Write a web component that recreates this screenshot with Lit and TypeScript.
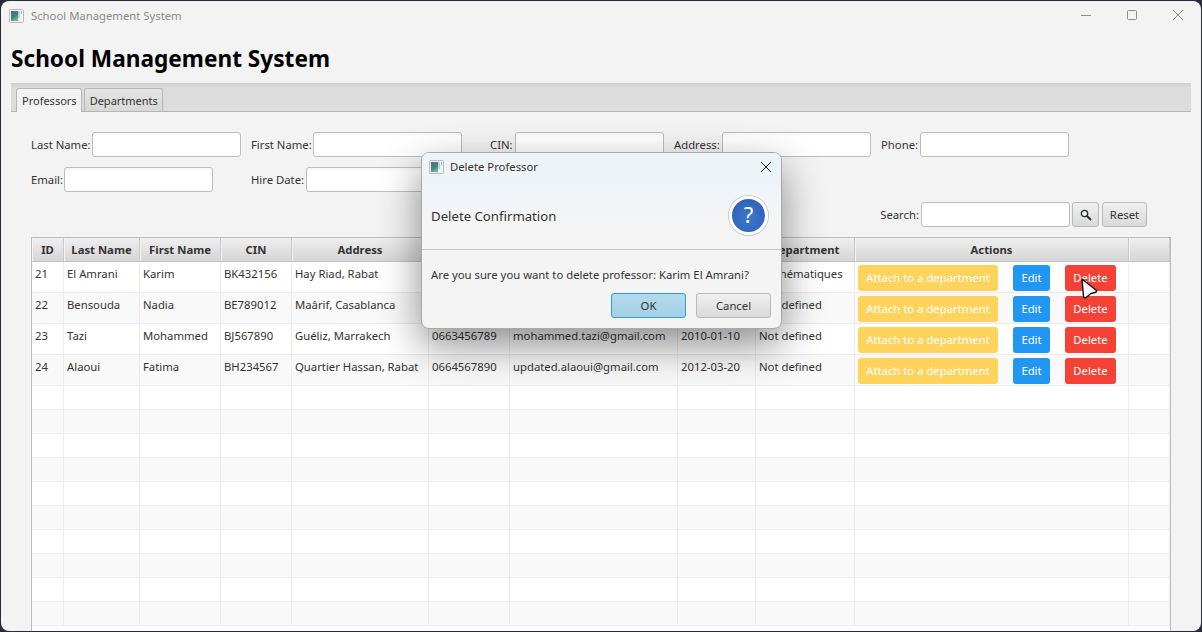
import { LitElement, css, html } from 'lit'
import { customElement } from 'lit/decorators.js'

// the dialog hides phone, email and hire date on the first two rows, so those stay empty
const professors = [
  ['21', 'El Amrani', 'Karim', 'BK432156', 'Hay Riad, Rabat', '', '', '', 'Mathématiques'],
  ['22', 'Bensouda', 'Nadia', 'BE789012', 'Maârif, Casablanca', '', '', '', 'Not defined'],
  ['23', 'Tazi', 'Mohammed', 'BJ567890', 'Guéliz, Marrakech', '0663456789', 'mohammed.tazi@gmail.com', '2010-01-10', 'Not defined'],
  ['24', 'Alaoui', 'Fatima', 'BH234567', 'Quartier Hassan, Rabat', '0664567890', 'updated.alaoui@gmail.com', '2012-03-20', 'Not defined'],
]

const columns = ['ID', 'Last Name', 'First Name', 'CIN', 'Address', 'Phone', 'Email', 'Hire Date', 'Department', 'Actions', '']

const appIcon = html`<svg class="app-icon" width="15" height="14" viewBox="0 0 15 14">
  <defs>
    <linearGradient id="ic" x1="0" y1="0" x2="0.4" y2="1">
      <stop offset="0" stop-color="#4f6f95" />
      <stop offset="0.6" stop-color="#3c8582" />
      <stop offset="1" stop-color="#6db38c" />
    </linearGradient>
  </defs>
  <rect x="0.5" y="0.5" width="14" height="13" rx="1" fill="#f1f3f3" stroke="#b9bcbe" />
  <rect x="2" y="2" width="7" height="10" fill="url(#ic)" />
  <rect x="9" y="2" width="2" height="7" fill="#c3d0cc" />
  <rect x="12" y="2" width="1" height="3" fill="#a9b8b3" />
</svg>`

@customElement('app-root')
export class AppRoot extends LitElement {
  static styles = css`
    :host {
      display: block;
      width: 1202px;
      height: 632px;
      background: #2b2a38;
      font-family: 'Noto Sans', sans-serif;
      font-size: 11.3px;
      color: #333;
      overflow: hidden;
    }
    .window {
      position: relative;
      height: 630px;
      margin: 1px;
      background: #f3f3f3;
      border-radius: 8px;
      overflow: hidden;
      display: flex;
      flex-direction: column;
    }
    .titlebar {
      height: 29px;
      flex: none;
      display: flex;
      align-items: center;
      padding-left: 8px;
      color: #8b8b8b;
      gap: 7px;
    }
    .win-buttons {
      margin-left: auto;
      display: flex;
    }
    .win-buttons svg {
      display: block;
      width: 46px;
      height: 29px;
    }
    h1 {
      margin: 13px 0 0 10px;
      font-size: 22.65px;
      line-height: 32px;
      font-weight: 700;
      color: #000;
      flex: none;
    }
    .tabs {
      flex: none;
      margin: 8px 10px 0 10px;
      height: 28px;
      background: linear-gradient(#cfcfcf, #dcdcdc 5px);
      border-bottom: 1px solid #b5b5b5;
      display: flex;
      align-items: flex-end;
      padding-left: 5px;
      gap: 2px;
    }
    .tab {
      height: 22px;
      padding: 0 4px 0 5px;
      border: 1px solid #b5b5b5;
      border-bottom: none;
      border-radius: 3px 3px 0 0;
      background: linear-gradient(#e4e4e4, #d8d8d8);
      display: flex;
      align-items: center;
      font-size: 11px;
    }
    .tab.active {
      background: #f3f3f3;
      height: 23px;
      margin-bottom: -1px;
    }
    .form {
      flex: none;
      margin: 20px 0 0 30px;
      display: grid;
      grid-template-columns: 210px 229px 174px 197px auto;
      column-gap: 10px;
      row-gap: 10px;
      justify-content: start;
    }
    .field {
      display: flex;
      align-items: center;
      justify-content: space-between;
      white-space: nowrap;
    }
    .field.last {
      width: 210px;
    }
    .field.first {
      width: 211px;
    }
    .field.cin {
      width: 174px;
    }
    .field.address {
      width: 197px;
    }
    .field.phone {
      width: 188px;
    }
    .field.email {
      width: 182px;
    }
    .field.hire {
      width: 204px;
    }
    input {
      box-sizing: border-box;
      width: 149px;
      height: 25px;
      margin: 0;
      padding: 0 6px;
      border: 1px solid #bdbdbd;
      border-radius: 3px;
      background: linear-gradient(#f7f7f7, #fff 4px);
      font: inherit;
      outline: none;
    }
    .search {
      flex: none;
      margin: 10px 54px 0 0;
      display: flex;
      justify-content: flex-end;
      align-items: center;
      gap: 2px;
    }
    .btn {
      box-sizing: border-box;
      height: 25px;
      border: 1px solid #b9b9b9;
      border-radius: 3px;
      background: linear-gradient(#f0f0f0, #d9d9d9);
      color: #333;
      font: inherit;
      padding: 0;
      display: flex;
      align-items: center;
      justify-content: center;
    }
    .search .icon-btn {
      width: 27px;
    }
    .search .reset {
      width: 45px;
      margin-left: 1px;
    }
    .table {
      flex: 1;
      min-height: 0;
      margin: 10px 30px 0 30px;
      border: 1px solid #bdbdbd;
      border-bottom: none;
      background: #fff;
      overflow: hidden;
    }
    .row {
      display: grid;
      grid-template-columns: 32px 76px 81px 71px 137px 81px 168px 78px 99px 274px 41px;
      height: 24px;
      box-sizing: border-box;
      border-bottom: 1px solid #ececec;
    }
    .row.data {
      height: 31px;
    }
    .row:nth-child(odd) {
      background: #f9f9f9;
    }
    .row > div {
      border-right: 1px solid #ececec;
      padding: 4px 3px 0;
      white-space: nowrap;
      overflow: hidden;
      line-height: 16px;
    }
    .row.head {
      background: linear-gradient(#efefef, #d6d6d6);
      border-bottom: 1px solid #c4c4c4;
      height: 24px;
      font-weight: 700;
      text-align: center;
    }
    .row.head > div {
      border-right: 1px solid #c8c8c8;
      box-shadow: inset 1px 0 0 #f4f4f4;
      padding-top: 4px;
    }
    .row > .actions {
      display: flex;
      gap: 15px;
      padding: 3px 0 0 3px;
    }
    .action {
      height: 26px;
      border: none;
      border-radius: 3px;
      color: #fff;
      font: inherit;
      padding: 0;
    }
    .attach {
      width: 140px;
      background: #ffd35c;
    }
    .edit {
      width: 37px;
      background: #2196f3;
    }
    .delete {
      width: 51px;
      background: #f44336;
    }
    .cursor {
      position: absolute;
      left: 1079px;
      top: 275px;
    }
    .dialog {
      position: absolute;
      left: 420px;
      top: 151px;
      width: 361px;
      height: 177px;
      box-sizing: border-box;
      border: 1px solid #a9a9a9;
      border-radius: 8px;
      background: #f4f4f4;
      box-shadow: 0 16px 42px rgba(0, 0, 0, 0.45);
      display: flex;
      flex-direction: column;
      overflow: hidden;
    }
    .dialog-title {
      flex: none;
      height: 27px;
      display: flex;
      align-items: center;
      gap: 6px;
      padding-left: 7px;
      background: #eef3f8;
    }
    .dialog-title svg:last-child {
      margin-left: auto;
      margin-right: 9px;
    }
    .dialog-header {
      flex: none;
      height: 70px;
      box-sizing: border-box;
      border-bottom: 1px solid #c8c8c8;
      background: linear-gradient(#eef3f8, #f5f5f5 60%);
      display: flex;
      align-items: center;
      justify-content: space-between;
      padding: 2px 13px 0 9px;
      font-size: 13.2px;
    }
    .help {
      box-sizing: border-box;
      width: 39px;
      height: 39px;
      border-radius: 50%;
      background: radial-gradient(circle at 50% 60%, #3d78d0, #2a5cae);
      border: 3px solid #fff;
      box-shadow: 0 0 0 1px #c0c8d4;
      color: #fff;
      font-size: 22px;
      line-height: 31px;
      text-align: center;
    }
    .dialog-text {
      margin: 17px 0 0 9px;
      line-height: 16px;
    }
    .dialog-buttons {
      margin: 10px 10px 0 0;
      display: flex;
      justify-content: flex-end;
      gap: 10px;
    }
    .dialog-buttons .btn {
      width: 75px;
      height: 25px;
    }
    .dialog-buttons .ok {
      background: linear-gradient(#b4d9ec, #a4d0e6);
      border: 1px solid #2f9fd0;
    }
  `

  render() {
    const empty = Array.from({ length: 10 })
    return html`
      <div class="window">
        <div class="titlebar">
          ${appIcon}
          <span>School Management System</span>
          <div class="win-buttons">
            <svg viewBox="0 0 46 29"><path d="M18 14.5h10" stroke="#8f8f8f" fill="none" /></svg>
            <svg viewBox="0 0 46 29"><rect x="18.5" y="9.5" width="9" height="9" rx="1" stroke="#8f8f8f" fill="none" /></svg>
            <svg viewBox="0 0 46 29"><path d="M18 9l10 10M28 9L18 19" stroke="#8f8f8f" fill="none" /></svg>
          </div>
        </div>
        <h1>School Management System</h1>
        <div class="tabs">
          <div class="tab active">Professors</div>
          <div class="tab">Departments</div>
        </div>
        <div class="form">
          <label class="field last">Last Name:<input /></label>
          <label class="field first">First Name:<input /></label>
          <label class="field cin">CIN:<input /></label>
          <label class="field address">Address:<input /></label>
          <label class="field phone">Phone:<input /></label>
          <label class="field email">Email:<input /></label>
          <label class="field hire">Hire Date:<input /></label>
        </div>
        <div class="search">
          <span>Search:</span>
          <input />
          <button class="btn icon-btn">
            <svg width="12" height="12" viewBox="0 0 12 12">
              <circle cx="4.5" cy="4.5" r="3.2" fill="#e8eef2" stroke="#2a2a2a" stroke-width="1.3" />
              <path d="M7 7l4 4" stroke="#2a2a2a" stroke-width="2" />
            </svg>
          </button>
          <button class="btn reset">Reset</button>
        </div>
        <div class="table">
          <div class="row head">${columns.map((c) => html`<div>${c}</div>`)}</div>
          ${professors.map(
            (p) => html`<div class="row data">
              ${p.map((v) => html`<div>${v}</div>`)}
              <div class="actions">
                <button class="action attach">Attach to a department</button>
                <button class="action edit">Edit</button>
                <button class="action delete">Delete</button>
              </div>
              <div></div>
            </div>`
          )}
          ${empty.map(() => html`<div class="row">${columns.map(() => html`<div></div>`)}</div>`)}
        </div>
        <svg class="cursor" width="20" height="25" viewBox="0 0 20 25">
          <path d="M2 3L16.5 14.5Q17 16 15 16.5L11 17.5 6 21.5Q4 22.5 3.5 20.5z" fill="#fff" stroke="#111" stroke-width="1.4" stroke-linejoin="round" />
        </svg>
        <div class="dialog">
          <div class="dialog-title">
            ${appIcon}
            <span>Delete Professor</span>
            <svg width="12" height="12" viewBox="0 0 12 12"><path d="M1 1l10 10M11 1L1 11" stroke="#222" fill="none" /></svg>
          </div>
          <div class="dialog-header">
            <span>Delete Confirmation</span>
            <div class="help">?</div>
          </div>
          <div class="dialog-text">Are you sure you want to delete professor: Karim El Amrani?</div>
          <div class="dialog-buttons">
            <button class="btn ok">OK</button>
            <button class="btn">Cancel</button>
          </div>
        </div>
      </div>
    `
  }
}
